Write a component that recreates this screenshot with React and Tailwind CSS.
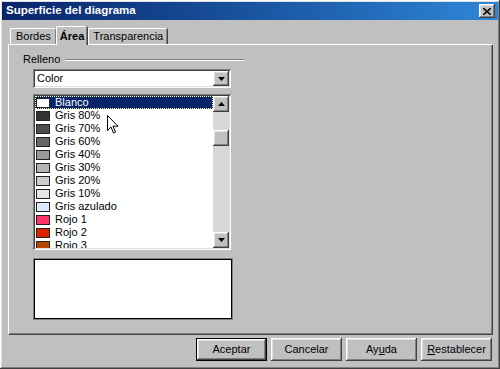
const RAISED =
  "shadow-[inset_-1px_-1px_#404040,inset_1px_1px_#ffffff,inset_-2px_-2px_#808080,inset_2px_2px_#dfdfdf]";
const SUNKEN =
  "shadow-[inset_1px_1px_#808080,inset_-1px_-1px_#ffffff,inset_2px_2px_#404040,inset_-2px_-2px_#dfdfdf]";

const COLORS = [
  { name: "Blanco", color: "#ffffff" },
  { name: "Gris 80%", color: "#333333" },
  { name: "Gris 70%", color: "#4c4c4c" },
  { name: "Gris 60%", color: "#666666" },
  { name: "Gris 40%", color: "#999999" },
  { name: "Gris 30%", color: "#b3b3b3" },
  { name: "Gris 20%", color: "#cccccc" },
  { name: "Gris 10%", color: "#e6e6e6" },
  { name: "Gris azulado", color: "#dde8ff" },
  { name: "Rojo 1", color: "#ff3366" },
  { name: "Rojo 2", color: "#dc2300" },
  { name: "Rojo 3", color: "#b84700" },
];

function Arrow({ up }) {
  return (
    <svg width="7" height="4" viewBox="0 0 7 4">
      <path d={up ? "M3.5 0 L7 4 L0 4 Z" : "M0 0 L7 0 L3.5 4 Z"} fill="#000" />
    </svg>
  );
}

function Button({ children, primary }) {
  return (
    <div
      className={
        primary
          ? "flex h-[23px] w-[71px] items-center justify-center border border-black"
          : "flex h-[23px] w-[71px] items-center justify-center"
      }
    >
      <div className={`flex h-full w-full items-center justify-center ${RAISED}`}>
        {children}
      </div>
    </div>
  );
}

export default function App() {
  return (
    <div
      className={`flex h-[369px] w-[500px] flex-col bg-[#c0c0c0] p-[2px] text-[11px] text-black ${RAISED}`}
      style={{ fontFamily: '"Liberation Sans", Arial, sans-serif' }}
    >
      {/* title bar */}
      <div className="flex h-[18px] items-center justify-between bg-gradient-to-r from-[#0a246a] to-[#2f86d8] pl-[4px] pr-[3px]">
        <span className="text-[11.5px] font-bold text-white">Superficie del diagrama</span>
        <div className={`flex h-[14px] w-[16px] items-center justify-center bg-[#c0c0c0] ${RAISED}`}>
          <svg width="8" height="7" viewBox="0 0 8 7">
            <path d="M0 0 L8 7 M8 0 L0 7" stroke="#000" strokeWidth="1.6" />
          </svg>
        </div>
      </div>

      <div className="flex flex-1 flex-col px-[6px] pt-[6px]">
        {/* tabs */}
        <div className="relative z-10 flex h-[18px] items-end pl-[2px]">
          <div className="flex h-[16px] items-center rounded-t-[2px] border-l border-t border-white px-[5px] shadow-[inset_-1px_0_#808080,1px_0_#404040]">
            Bordes
          </div>
          <div className="-mb-[1px] flex h-[19px] items-center rounded-t-[2px] border-l border-t border-white bg-[#c0c0c0] px-[3px] font-bold shadow-[inset_-1px_0_#808080,1px_0_#404040]">
            Área
          </div>
          <div className="ml-[1px] flex h-[16px] items-center rounded-t-[2px] border-l border-t border-white px-[4px] shadow-[inset_-1px_0_#808080,1px_0_#404040]">
            Transparencia
          </div>
        </div>

        {/* panel */}
        <div className="flex h-[290px] w-[484px] flex-col border-l border-t border-white pt-[8px] shadow-[inset_-1px_-1px_#808080,1px_1px_#404040]">
          <div className="flex w-[235px] items-center pl-[14px]">
            <span className="leading-[13px]">Relleno</span>
            <div className="ml-[5px] h-[2px] flex-1 border-t border-b border-t-[#808080] border-b-white" />
          </div>

          <div className="ml-[24px] mt-[3px] w-[198px]">
            {/* dropdown */}
            <div className={`flex h-[19px] items-center bg-white p-[2px] ${SUNKEN}`}>
              <span className="flex-1 pl-[2px]">Color</span>
              <div className={`flex h-[15px] w-[16px] items-center justify-center bg-[#c0c0c0] ${RAISED}`}>
                <Arrow />
              </div>
            </div>

            {/* list */}
            <div className={`relative mt-[6px] flex h-[156px] bg-white p-[2px] ${SUNKEN}`}>
              <div className="flex-1 overflow-hidden">
                {COLORS.map((c, i) => (
                  <div
                    key={c.name}
                    className={
                      i === 0
                        ? "flex h-[13px] items-center border border-dotted border-[#ffff99] bg-[#0a246a] text-white"
                        : "flex h-[13px] items-center border border-transparent"
                    }
                  >
                    <span
                      className="h-[10px] w-[14px] shrink-0 border border-[#222]"
                      style={{ backgroundColor: c.color }}
                    />
                    <span className="ml-[5px] leading-[11px]">{c.name}</span>
                  </div>
                ))}
              </div>
              <div className="flex w-[16px] flex-col bg-[#d8d8d8]">
                <div className={`flex h-[16px] items-center justify-center bg-[#c0c0c0] ${RAISED}`}>
                  <Arrow up />
                </div>
                <div className="h-[18px]" />
                <div className={`h-[16px] bg-[#c0c0c0] ${RAISED}`} />
                <div className="flex-1" />
                <div className={`flex h-[16px] items-center justify-center bg-[#c0c0c0] ${RAISED}`}>
                  <Arrow />
                </div>
              </div>

              {/* mouse pointer */}
              <svg
                className="absolute left-[74px] top-[21px]"
                width="12"
                height="19"
                viewBox="0 0 12 19"
              >
                <path
                  d="M0.5 0.5 L0.5 15.5 L4 12 L6.5 18 L8.5 17 L6 11.2 L11 11.2 Z"
                  fill="#fff"
                  stroke="#000"
                  strokeWidth="1"
                  strokeLinejoin="miter"
                />
              </svg>
            </div>

            {/* preview */}
            <div className="mt-[8px] h-[62px] w-[200px] border border-[#808080] bg-white shadow-[inset_1px_1px_#000,inset_-1px_-1px_#000]" />
          </div>
        </div>

        {/* buttons */}
        <div className="mt-[4px] flex justify-end gap-[4px]">
          <Button primary>Aceptar</Button>
          <Button>Cancelar</Button>
          <Button>
            <span>
              Ay<span className="underline">u</span>da
            </span>
          </Button>
          <Button>
            <span>
              <span className="underline">R</span>establecer
            </span>
          </Button>
        </div>
      </div>
    </div>
  );
}
